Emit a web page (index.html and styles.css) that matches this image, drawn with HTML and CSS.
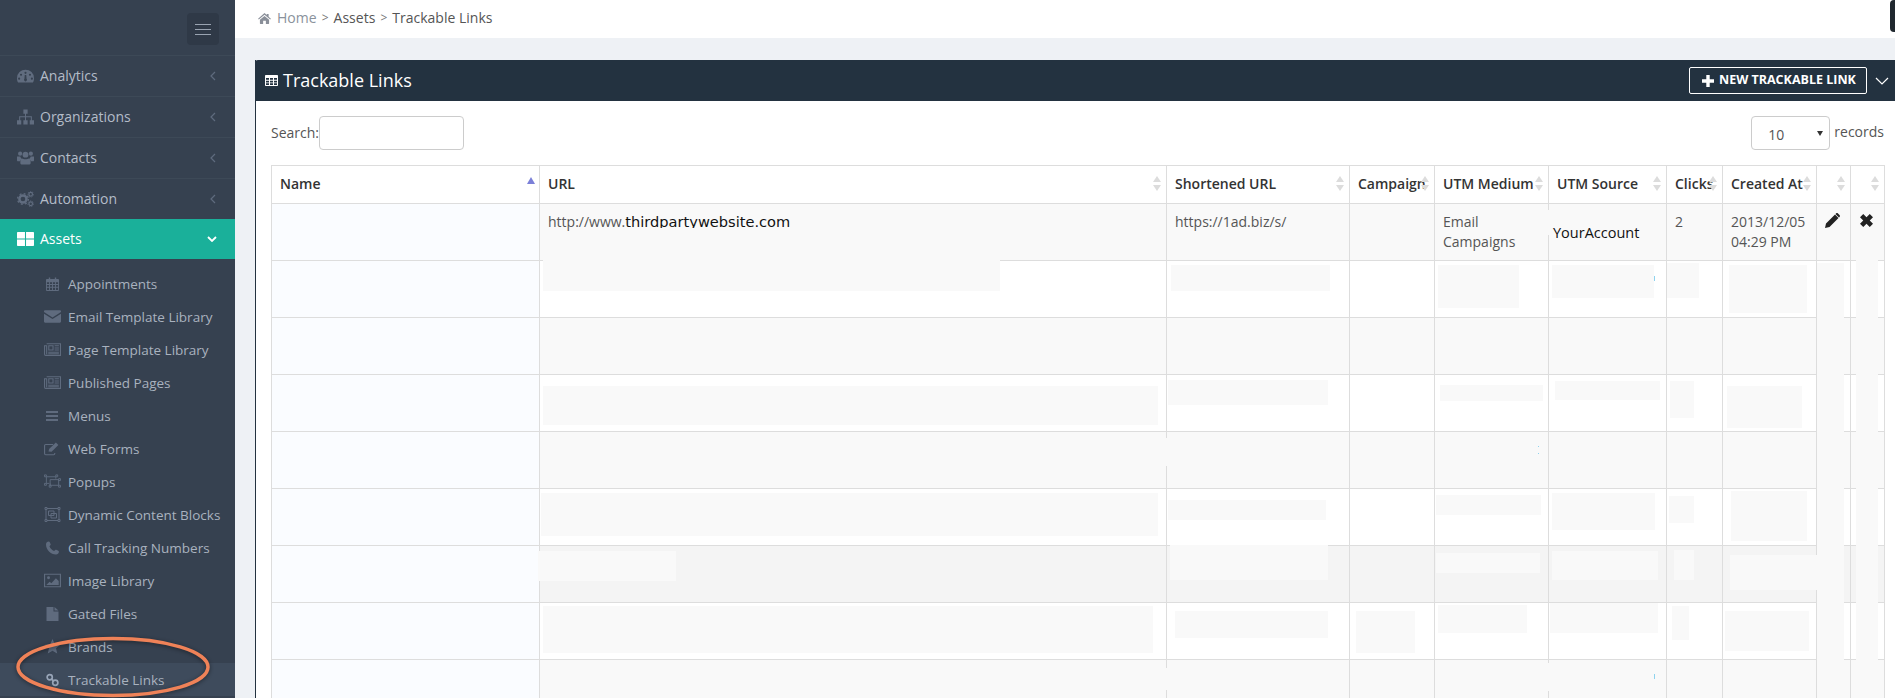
FILE: index.html
```html
<!DOCTYPE html>
<html lang="en">
<head>
<meta charset="utf-8">
<title>Trackable Links</title>
<link rel="stylesheet" href="styles.css">
</head>
<body>
<svg class="sprite" aria-hidden="true">
  <symbol id="i-dash" viewBox="0 0 16 14"><path fill-rule="evenodd" d="M8 1a8 8 0 0 1 8 8c0 2-.5 3.300-1 4H1C.5 12.300 0 11 0 9a8 8 0 0 1 8-8zM8 3a1 1 0 1 0 0 2 1 1 0 0 0 0-2zM3.800 4.800a1 1 0 1 0 0 2 1 1 0 0 0 0-2zM12.200 4.800a1 1 0 1 0 0 2 1 1 0 0 0 0-2zM2 8.500a1 1 0 1 0 0 2 1 1 0 0 0 0-2zM14 8.500a1 1 0 1 0 0 2 1 1 0 0 0 0-2zM7.300 6 7 9.600a1.400 1.400 0 1 0 2 0L8.700 6z"/></symbol>
  <symbol id="i-map" viewBox="0 0 16 14"><path d="M6 0h4v4H8.500v2.300H14V10h-1V7.300H8.500V10h-1V7.300H3V10H2V6.300h5.500V4H6zM0 10h4v4H0zM6 10h4v4H6zM12 10h4v4h-4z"/></symbol>
  <symbol id="i-users" viewBox="0 0 18 16"><circle cx="3.300" cy="3.400" r="2.200"/><circle cx="14.700" cy="3.400" r="2.200"/><circle cx="9" cy="4.500" r="3.100"/><path d="M0 6.500h3.500c.5 1.500 1 2 1.500 2.400-1 .6-1.600 1.600-1.800 2.600H1C.2 11.500 0 11 0 10zM18 6.500h-3.500c-.5 1.500-1 2-1.500 2.400 1 .6 1.600 1.600 1.800 2.600H17c.8 0 1-.5 1-1.500zM5.500 8.500C6.500 9.500 11.500 9.500 12.500 8.500c1.500.2 2 2.500 2 4.500 0 1.500-1 2-2 2h-7c-1 0-2-.5-2-2 0-2 .5-4.300 2-4.500z"/></symbol>
  <symbol id="i-gears" viewBox="0 0 18 16"><circle cx="6.300" cy="8" r="3.800" fill="none" stroke="currentColor" stroke-width="2.600"/><circle cx="6.300" cy="8" r="5.700" fill="none" stroke="currentColor" stroke-width="1.400" stroke-dasharray="2 2.500"/><circle cx="14.500" cy="3" r="1.900" fill="none" stroke="currentColor" stroke-width="1.300"/><circle cx="14.500" cy="3" r="3" fill="none" stroke="currentColor" stroke-width=".9" stroke-dasharray="1.300 1.300"/><circle cx="14.500" cy="13" r="1.900" fill="none" stroke="currentColor" stroke-width="1.300"/><circle cx="14.500" cy="13" r="3" fill="none" stroke="currentColor" stroke-width=".9" stroke-dasharray="1.300 1.300"/></symbol>
  <symbol id="i-grid" viewBox="0 0 16 13"><path d="M0 .7C0 .3.300 0 .7 0h6.800v6H0zM8.500 0h6.800c.4 0 .7.300.7.700V6H8.500zM0 7h7.500v6H.7c-.4 0-.7-.3-.7-.7zM8.500 7H16v5.300c0 .4-.3.700-.7.700H8.500z"/></symbol>
  <symbol id="i-cal" viewBox="0 0 14 15"><path fill-rule="evenodd" d="M1 2h2V.5h1.500V2h5V.5H11V2h2a1 1 0 0 1 1 1v11a1 1 0 0 1-1 1H1a1 1 0 0 1-1-1V3a1 1 0 0 1 1-1zM1 5.500v2h2.300v-2zM4.300 5.500v2h2.200v-2zM7.500 5.500v2h2.200v-2zM10.700 5.500v2H13v-2zM1 8.500v2h2.300v-2zM4.300 8.500v2h2.200v-2zM7.500 8.500v2h2.200v-2zM10.700 8.500v2H13v-2zM1 11.500V14h2.300v-2.500zM4.300 11.500V14h2.200v-2.500zM7.500 11.500V14h2.200v-2.500zM10.700 11.500V14H13v-2.500z"/></symbol>
  <symbol id="i-mail" viewBox="0 0 15 11"><path d="M1 0h13c.6 0 1 .4 1 1v.6L7.500 6.300 0 1.600V1c0-.6.400-1 1-1zM0 3l7.500 4.600L15 3v7c0 .6-.4 1-1 1H1c-.6 0-1-.4-1-1z"/></symbol>
  <symbol id="i-news" viewBox="0 0 16 12"><path fill="none" stroke="currentColor" d="M2.500.5h13v11H1.500a1 1 0 0 1-1-1V2.500h2v8"/><path fill="none" stroke="currentColor" d="M4.500 2.500h4v4h-4z"/><path d="M10 2h4v1h-4zM10 4h4v1h-4zM10 6h4v1h-4zM4 8h10v1H4zM4 9.500h10v1H4z"/></symbol>
  <symbol id="i-bars" viewBox="0 0 12 10"><path d="M0 0h12v2H0zM0 4h12v2H0zM0 8h12v2H0z"/></symbol>
  <symbol id="i-edit" viewBox="0 0 15 12"><path fill="none" stroke="currentColor" d="M9.500 10v.5a1 1 0 0 1-1 1h-7a1 1 0 0 1-1-1v-7a1 1 0 0 1 1-1H8"/><path d="M4 8.700 4.500 6.500 10.500.7l2.200 2.200L6.700 8.900z"/></symbol>
  <symbol id="i-pop" viewBox="0 0 18 15"><g fill="none" stroke="currentColor"><path d="M2.500 2.500h10M2.500 2.500v7M2.500 9.500h3M12.500 2.500v2"/><path d="M6.500 5.500h9v6h-9zM6.500 9.500v2"/><path d="M.5.500h2v2h-2zM12.500.500h2v2h-2zM.5 9.500h2v2h-2zM15.500 4.500h2v2h-2zM5.500 11.500h2v2h-2zM15.500 11.500h2v2h-2z"/></g></symbol>
  <symbol id="i-dyn" viewBox="0 0 16 15"><g fill="none" stroke="currentColor"><path d="M.5.500h2v2h-2zM13.500.500h2v2h-2zM.5 12.500h2v2h-2zM13.500 12.500h2v2h-2z"/><path d="M2.500 1.500h11M2.500 13.500h11M1.500 2.500v10M14.500 2.500v10"/><path d="M4 4h5.500v4.500H4zM6.500 6.500H12v4.500H6.500z"/></g></symbol>
  <symbol id="i-phone" viewBox="0 0 12 12"><path d="M2.500 0c.5 0 .8.300 1 .8l.8 1.700c.1.400 0 .7-.3 1L3.200 4.300c.6 1.800 2.300 3.600 4.300 4.400l1-.9c.3-.3.700-.3 1-.2l1.800 1c.5.200.7.600.6 1-.2 1.300-1.200 2.300-2.600 2.300C4.500 12 0 7.500 0 2.700 0 1.200 1.200 0 2.500 0z"/></symbol>
  <symbol id="i-image" viewBox="0 0 15 12"><path fill="none" stroke="currentColor" d="M.5.500h14v11H.5z"/><circle cx="4" cy="3.500" r="1.300"/><path d="M2 10 5 7l1.500 1.500L10.500 4 13 6.500V10z"/></symbol>
  <symbol id="i-file" viewBox="0 0 12 14"><path d="M0 0h7v4.500h5V14H0zM8 0l4 3.500H8z"/></symbol>
  <symbol id="i-star" viewBox="0 0 14 14"><path d="m7 0 2.100 4.800 4.900.5-3.700 3.300 1.100 5L7 11l-4.400 2.600 1.100-5L0 5.300l4.900-.5z"/></symbol>
  <symbol id="i-link" viewBox="0 0 14 14"><g fill="none" stroke="currentColor" stroke-width="1.800"><circle cx="4" cy="4" r="2.800"/><circle cx="10" cy="10" r="2.800"/><path d="m5.500 5.500 3 3"/></g></symbol>
  <symbol id="i-home" viewBox="0 0 14 12"><path d="M7 0 9.500 2.200V1H11.500v3L14 6.300l-.8.900L7 2 .8 7.200 0 6.300zM7 3.200l5 4.200V11.500a.5.500 0 0 1-.5.500H8.500V8.500h-3V12h-3a.5.500 0 0 1-.5-.5V7.400z"/></symbol>
  <symbol id="i-table" viewBox="0 0 13 11"><path fill-rule="evenodd" d="M1 0h11c.6 0 1 .4 1 1v9c0 .6-.4 1-1 1H1c-.6 0-1-.4-1-1V1c0-.6.400-1 1-1zM1 3v1.700h3V3zM5 3v1.700h3V3zM9 3v1.700h3V3zM1 5.700v1.700h3V5.700zM5 5.700v1.700h3V5.700zM9 5.700v1.700h3V5.700zM1 8.300V10h3V8.300zM5 8.300V10h3V8.300zM9 8.300V10h3V8.300z"/></symbol>
  <symbol id="i-pencil" viewBox="0 0 15 15"><path d="M0 15l1-4.500L10 1.500l3.500 3.500-9 9zM11 .5c.6-.6 1.400-.6 2 0l1.500 1.500c.6.600.6 1.400 0 2l-.5.500L10.500 1z"/></symbol>
  <symbol id="i-x" viewBox="0 0 12 12"><path d="M3 0 6 3 9 0l3 3-3 3 3 3-3 3-3-3-3 3-3-3 3-3-3-3z"/></symbol>
  <symbol id="i-plus" viewBox="0 0 12 12"><path d="M4.300 0h3.400v4.300H12v3.400H7.700V12H4.300V7.700H0V4.300h4.300z"/></symbol>
</svg>

<div class="app">
  <aside class="sidebar">
    <div class="side-top"><button class="burger" type="button" aria-label="Toggle menu"><span></span><span></span><span></span></button></div>
    <nav>
      <a class="nav-item"><svg class="ico i16"><use href="#i-dash"/></svg><span class="label">Analytics</span><svg class="chev" viewBox="0 0 6 10"><path d="M5 1 1 5l4 4"/></svg></a>
      <a class="nav-item"><svg class="ico i16"><use href="#i-map"/></svg><span class="label">Organizations</span><svg class="chev" viewBox="0 0 6 10"><path d="M5 1 1 5l4 4"/></svg></a>
      <a class="nav-item"><svg class="ico i16"><use href="#i-users"/></svg><span class="label">Contacts</span><svg class="chev" viewBox="0 0 6 10"><path d="M5 1 1 5l4 4"/></svg></a>
      <a class="nav-item"><svg class="ico i16"><use href="#i-gears"/></svg><span class="label">Automation</span><svg class="chev" viewBox="0 0 6 10"><path d="M5 1 1 5l4 4"/></svg></a>
      <a class="nav-item active"><svg class="ico i16"><use href="#i-grid"/></svg><span class="label">Assets</span><svg class="chev down" viewBox="0 0 10 6"><path d="M1 1l4 4 4-4"/></svg></a>
      <div class="sub">
        <a class="sub-item"><svg class="ico narrow"><use href="#i-cal"/></svg>Appointments</a>
        <a class="sub-item"><svg class="ico"><use href="#i-mail"/></svg>Email Template Library</a>
        <a class="sub-item"><svg class="ico"><use href="#i-news"/></svg>Page Template Library</a>
        <a class="sub-item"><svg class="ico"><use href="#i-news"/></svg>Published Pages</a>
        <a class="sub-item"><svg class="ico bars"><use href="#i-bars"/></svg>Menus</a>
        <a class="sub-item"><svg class="ico"><use href="#i-edit"/></svg>Web Forms</a>
        <a class="sub-item"><svg class="ico"><use href="#i-pop"/></svg>Popups</a>
        <a class="sub-item"><svg class="ico"><use href="#i-dyn"/></svg>Dynamic Content Blocks</a>
        <a class="sub-item"><svg class="ico narrow"><use href="#i-phone"/></svg>Call Tracking Numbers</a>
        <a class="sub-item"><svg class="ico"><use href="#i-image"/></svg>Image Library</a>
        <a class="sub-item"><svg class="ico narrow"><use href="#i-file"/></svg>Gated Files</a>
        <a class="sub-item"><svg class="ico"><use href="#i-star"/></svg>Brands</a>
        <a class="sub-item current"><svg class="ico narrow"><use href="#i-link"/></svg>Trackable Links</a>
      </div>
    </nav>
  </aside>

  <main class="main">
    <div class="topbar">
      <svg class="home"><use href="#i-home"/></svg>
      <a class="crumb-home">Home</a><span class="sep">&gt;</span><a class="crumb">Assets</a><span class="sep">&gt;</span><a class="crumb">Trackable Links</a>
      <span class="corner"></span>
    </div>
    <section class="panel">
      <header class="panel-head">
        <svg class="table-ico"><use href="#i-table"/></svg>
        <h1>Trackable Links</h1>
        <button class="new-btn" type="button"><svg><use href="#i-plus"/></svg>NEW TRACKABLE LINK</button>
        <svg class="collapse" viewBox="0 0 14 8"><path d="M1 1l6 6 6-6"/></svg>
      </header>
      <div class="panel-body">
        <div class="controls">
          <label class="search">Search:<input type="text"></label>
          <div class="len"><span class="select-wrap"><select><option>10</option></select></span>records</div>
        </div>
        <table class="grid">
          <thead>
            <tr>
              <th class="c1 asc">Name</th><th class="c2 sort">URL</th><th class="c3 sort">Shortened URL</th><th class="c4 sort">Campaign</th><th class="c5 sort">UTM Medium</th><th class="c6 sort">UTM Source</th><th class="c7 sort">Clicks</th><th class="c8 sort">Created At</th><th class="c9 sort"></th><th class="c10 sort"></th>
            </tr>
          </thead>
          <tbody>
            <tr class="odd">
              <td class="name"></td>
              <td>http://www.<span class="paste-url">thirdpartywebsite.com</span></td>
              <td>https://1ad.biz/s/</td><td></td><td>Email Campaigns</td>
              <td class="paste-cell"><span class="paste-src">YourAccount</span></td>
              <td>2</td><td>2013/12/05 04:29 PM</td>
              <td><svg class="act"><use href="#i-pencil"/></svg></td>
              <td><svg class="act small"><use href="#i-x"/></svg></td>
            </tr>
            <tr><td class="name"></td><td></td><td></td><td></td><td></td><td></td><td></td><td></td><td></td><td></td></tr>
            <tr class="odd"><td class="name"></td><td></td><td></td><td></td><td></td><td></td><td></td><td></td><td></td><td></td></tr>
            <tr><td class="name"></td><td></td><td></td><td></td><td></td><td></td><td></td><td></td><td></td><td></td></tr>
            <tr class="odd"><td class="name"></td><td></td><td></td><td></td><td></td><td></td><td></td><td></td><td></td><td></td></tr>
            <tr><td class="name"></td><td></td><td></td><td></td><td></td><td></td><td></td><td></td><td></td><td></td></tr>
            <tr class="hover"><td class="name"></td><td></td><td></td><td></td><td></td><td></td><td></td><td></td><td></td><td></td></tr>
            <tr><td class="name"></td><td></td><td></td><td></td><td></td><td></td><td></td><td></td><td></td><td></td></tr>
            <tr class="odd"><td class="name"></td><td></td><td></td><td></td><td></td><td></td><td></td><td></td><td></td><td></td></tr>
          </tbody>
        </table>
      </div>
    </section>
  </main>
</div>

<svg class="redactions" viewBox="0 0 1895 698" aria-hidden="true">
  <rect x="1546" y="210" width="7" height="25"/>
  <rect x="543" y="259" width="457" height="32"/>
  <rect x="1171" y="265" width="159" height="26"/>
  <rect x="1438" y="265" width="81" height="43"/>
  <rect x="1552" y="265" width="102" height="33"/>
  <rect x="1667" y="263" width="32" height="35"/>
  <rect x="1729" y="265" width="78" height="48"/>
  <rect x="543" y="386" width="615" height="39"/>
  <rect x="1168" y="380" width="160" height="25"/>
  <rect x="1440" y="385" width="103" height="16"/>
  <rect x="1555" y="381" width="105" height="19"/>
  <rect x="1670" y="381" width="24" height="37"/>
  <rect x="1727" y="386" width="75" height="42"/>
  <rect x="1100" y="438" width="68" height="28"/>
  <rect x="541" y="493" width="617" height="43"/>
  <rect x="1168" y="500" width="158" height="20"/>
  <rect x="1436" y="495" width="105" height="20"/>
  <rect x="1552" y="493" width="103" height="37"/>
  <rect x="1669" y="496" width="25" height="27"/>
  <rect x="1731" y="491" width="76" height="50"/>
  <rect x="538" y="551" width="138" height="30"/>
  <rect x="1170" y="545" width="158" height="35"/>
  <rect x="1436" y="553" width="104" height="20"/>
  <rect x="1552" y="551" width="106" height="29"/>
  <rect x="1674" y="550" width="20" height="30"/>
  <rect x="1730" y="555" width="90" height="35"/>
  <rect x="543" y="606" width="610" height="47"/>
  <rect x="1175" y="611" width="153" height="27"/>
  <rect x="1356" y="611" width="59" height="42"/>
  <rect x="1438" y="605" width="89" height="28"/>
  <rect x="1550" y="603" width="108" height="30"/>
  <rect x="1672" y="606" width="17" height="34"/>
  <rect x="1725" y="611" width="84" height="40"/>
  <rect x="1160" y="668" width="10" height="22"/>
  <rect x="1545" y="663" width="7" height="28"/>
  <rect x="1817" y="263" width="27" height="435"/>
  <rect x="1856" y="250" width="22" height="448"/>
  <rect class="speck" x="1654" y="276" width="1" height="5"/>
  <rect class="speck" x="1538" y="446" width="1" height="1"/>
  <rect class="speck" x="1538" y="453" width="1" height="1"/>
  <rect class="speck" x="1654" y="674" width="1" height="5"/>
</svg>

<svg class="callout" viewBox="0 0 240 80" aria-hidden="true"><ellipse cx="113" cy="40" rx="95" ry="28.500"/></svg>
</body>
</html>
```

FILE: styles.css
```css
* { box-sizing: border-box; }
html, body { margin: 0; height: 100%; overflow: hidden; }
body { position: relative; font: 14px/20px "Open Sans", "Liberation Sans", sans-serif; color: #555; background: #eef1f5; }
.sprite { display: none; }
svg { fill: currentColor; }

.app { display: flex; height: 698px; }

.sidebar { width: 235px; flex: none; background: #364150; color: #b4bcc8; overflow: hidden; }
.side-top { height: 55px; display: flex; justify-content: flex-end; padding: 13px 16px 0 0; }
.burger { width: 32px; height: 32px; border: 0; border-radius: 4px; background: #2f3947; display: flex; flex-direction: column; justify-content: center; align-items: center; gap: 4px; padding: 0; }
.burger span { display: block; width: 16px; height: 1px; background: #99a3b1; }

.nav-item { height: 41px; display: flex; align-items: center; padding: 0 17px; border-top: 1px solid #3d4957; }
.nav-item .ico { color: #606c7f; }
.nav-item .i16 { width: 17px; height: 16px; margin-right: 6px; flex: none; }
.label { flex: 1; }
.chev { width: 6px; height: 10px; fill: none; stroke: #5f6b7e; stroke-width: 1.200; margin-right: 2px; }
.nav-item.active { height: 40px; background: #1ab09a; color: #fff; border-top: 0; }
.nav-item.active .ico { color: #fff; }
.chev.down { width: 10px; height: 6px; stroke: #fff; stroke-width: 1.800; margin-right: 1px; }

.sub { padding-top: 8px; font-size: 13.500px; color: #a9b2bf; }
.sub-item { height: 33px; display: flex; align-items: center; padding-left: 44px; }
.sub-item .ico { width: 17px; height: 15px; margin-right: 7px; flex: none; color: #5f6b7e; }
.sub-item .ico.narrow { width: 13px; height: 14px; margin: 0 9px 0 2px; }
.sub-item .ico.bars { width: 12px; height: 10px; margin: 0 10px 0 2px; }
.sub-item.current { background: #3e4b5c; }
.sub-item.current .ico { color: #98a5b8; }

.main { flex: 1; min-width: 0; display: flex; flex-direction: column; }
.topbar { position: relative; height: 38px; flex: none; background: #fff; display: flex; align-items: center; padding: 0 0 2px 23px; }
.home { width: 13px; height: 11px; margin-right: 6px; color: #8a8f99; }
.crumb-home { color: #8a929c; }
.crumb { color: #555; }
.sep { width: 17px; text-align: center; color: #777; font-size: 12px; }
.corner { position: absolute; right: 0; top: 0; width: 5px; height: 32px; background: #20282f; border-radius: 4px 0 0 4px; }

.panel { flex: 1; margin: 22px 0 0 20px; background: #fff; border-left: 1px solid #233240; min-height: 0; }
.panel-head { height: 41px; background: #233240; color: #fff; display: flex; align-items: center; padding: 0 6px 0 10px; margin-left: -1px; border-radius: 3px 0 0 0; }
.table-ico { width: 13px; height: 11px; margin-right: 5px; flex: none; }
h1 { flex: 1; margin: 0 0 2px; font-size: 18px; font-weight: 400; line-height: 24px; }
.new-btn { width: 178px; height: 27px; display: flex; align-items: center; padding: 0 0 0 12px; background: none; border: 1px solid #fff; border-radius: 2px; color: #fff; font: 700 12.500px/1 "Open Sans", sans-serif; white-space: nowrap; }
.new-btn svg { width: 12px; height: 12px; margin-right: 5px; flex: none; }
.collapse { width: 14px; height: 8px; margin-left: 8px; fill: none; stroke: #fff; stroke-width: 1.200; }

.panel-body { padding: 15px 11px 0 15px; }
.controls { display: flex; justify-content: space-between; align-items: flex-start; height: 49px; }
.search { display: flex; align-items: center; }
.search input { width: 145px; height: 34px; margin-left: 0; border: 1px solid #ccc; border-radius: 4px; background: #fff; }
.len { display: flex; align-items: flex-start; line-height: 32px; }
.select-wrap { position: relative; display: block; width: 79px; height: 34px; margin-right: 4px; }
.select-wrap::after { content: ""; position: absolute; right: 7px; top: 15px; border: 3px solid transparent; border-top: 5px solid #333; border-bottom: 0; }
select { appearance: none; width: 100%; height: 100%; padding: 2px 0 0 16px; border: 1px solid #ccc; border-radius: 4px; background: #fff; color: #555; font: 14px "Open Sans", sans-serif; }

.grid { table-layout: fixed; width: 1613px; border-collapse: collapse; }
.grid th, .grid td { border: 1px solid #ddd; padding: 8px; vertical-align: top; overflow: visible; }
.grid th { position: relative; height: 38px; color: #333; font-weight: 600; text-align: left; white-space: nowrap; }
.grid td { height: 57px; }
.c1 { width: 268px; } .c2 { width: 627px; } .c3 { width: 183px; } .c4 { width: 85px; } .c5 { width: 114px; }
.c6 { width: 118px; } .c7 { width: 56px; } .c8 { width: 94px; } .c9 { width: 34px; } .c10 { width: 34px; }

.sort::before, .sort::after, .asc::before { content: ""; position: absolute; right: 5px; border: 4px solid transparent; }
.sort::before { top: 10px; border-top: 0; border-bottom: 6px solid #dcdcdc; }
.sort::after { top: 19px; border-bottom: 0; border-top: 6px solid #dcdcdc; }
.asc::before { top: 11px; right: 4px; border-top: 0; border-bottom: 7px solid #7b80d8; }

tr.odd td { background: #f9f9f9; }
tr.hover td { background: #f4f4f4; }
.grid td.name { background: #fafcff; }
.paste-url { display: inline-block; height: 16px; overflow: hidden; vertical-align: top; font-family: "DejaVu Sans", sans-serif; font-size: 14.600px; color: #111; }
.grid td.paste-cell { padding: 19px 0 0 4px; }
.paste-src { position: relative; z-index: 2; color: #111; font-size: 14.500px; }
.act { display: block; width: 15px; height: 15px; margin: 1px 0 0; color: #222; }
.act.small { width: 13px; height: 13px; margin: 2px 0 0 1px; }

.redactions { position: absolute; left: 0; top: 0; width: 1895px; height: 698px; fill: #f9f9f9; pointer-events: none; z-index: 1; }
.speck { fill: #8fd3ee; }
.callout { position: absolute; left: 0; top: 627px; width: 240px; height: 80px; fill: none; stroke: #ef8258; stroke-width: 3.500; filter: drop-shadow(0 1px 2px rgba(0,0,0,.45)); pointer-events: none; z-index: 3; }
```
